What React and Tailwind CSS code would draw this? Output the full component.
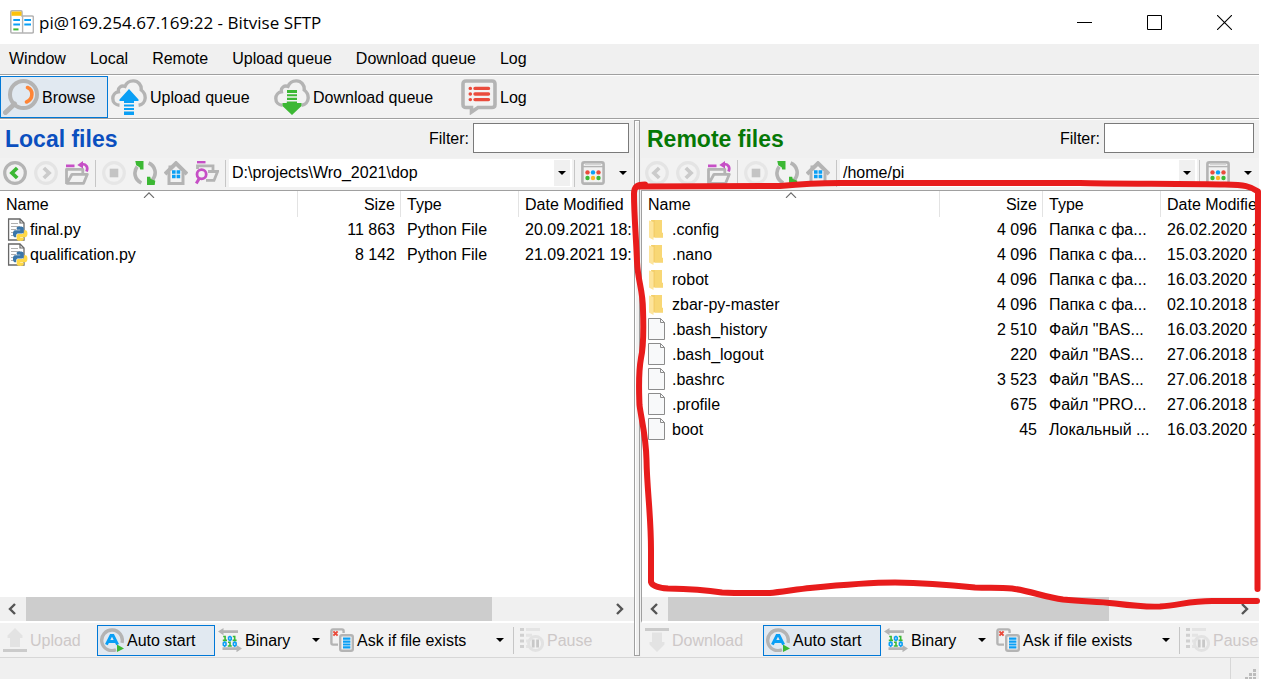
import React from "react";

const GRAY = "#b4b4b4";
const PYTHON_HALF =
  "M14.25.18l.9.2.73.26.59.3.45.32.34.34.25.34.16.33.1.3.04.26.02.2-.01.13V8.5l-.05.63-.13.55-.21.46-.26.38-.3.31-.33.25-.35.19-.35.14-.33.1-.3.07-.26.04-.21.02H8.77l-.69.05-.59.14-.5.22-.41.27-.33.32-.27.35-.2.36-.15.37-.1.35-.07.32-.04.27-.02.21v3.06H3.17l-.21-.03-.28-.07-.32-.12-.35-.18-.36-.26-.36-.36-.35-.46-.32-.59-.28-.73-.21-.88-.14-1.05-.05-1.23.06-1.22.16-1.04.24-.87.32-.71.36-.57.4-.44.42-.33.42-.24.4-.16.36-.1.32-.05.24-.01h.16l.06.01h8.16v-.83H6.18l-.01-2.75-.02-.37.05-.34.11-.31.17-.28.25-.26.31-.23.38-.2.44-.18.51-.15.58-.12.64-.1.71-.06.77-.04.84-.02 1.27.05z";

function Svg({ size = 24, children }) {
  return (
    <svg width={size} height={size} viewBox={`0 0 ${size} ${size}`} fill="none" className="shrink-0" aria-hidden="true">
      {children}
    </svg>
  );
}

/* Large toolbar icons */
const BrowseIcon = () => (
  <Svg size={36}>
    <path d="M11.5 25L2.5 33.5" stroke={GRAY} strokeWidth="5" strokeLinecap="round" />
    <circle cx="20.5" cy="15.5" r="13.5" stroke={GRAY} strokeWidth="4" />
    <path d="M24.5 8.5C30.5 11 30.5 20 23.5 23" stroke="#ff8536" strokeWidth="3.6" strokeLinecap="round" />
  </Svg>
);
const Cloud = () => (
  <path
    d="M8.5 26.3C4.5 26 1.8 23.2 1.8 19.4C1.8 16 4.2 13.3 7.4 12.8C6.6 8.6 10.4 6 14 7.4C15.6 3.6 18.8 1.8 22.4 1.9C27.4 2 30.6 6 30.2 11C32.8 13 34.3 15.8 34.2 19C34 22.8 31.4 25.8 27.6 26.3"
    stroke={GRAY}
    strokeWidth="3.4"
  />
);
const UploadQueueIcon = () => (
  <Svg size={36}>
    <Cloud />
    <path d="M18 10L27.5 20.5V22H23V24H13V22H8.5V20.5Z M13 25.5H23V27.5H13Z M13 29H23V31H13Z M13 32.5H23V36H13Z" fill="#0a9ff5" />
  </Svg>
);
const DownloadQueueIcon = () => (
  <Svg size={36}>
    <Cloud />
    <path d="M18 36L8.5 27V24H12.8V22.5H23V24H27.5V27Z M13 11H23V14H13Z M13 15.2H23V17.3H13Z M13 18.8H23V21H13Z" fill="#3cb834" />
  </Svg>
);
const LogIcon = () => (
  <Svg size={36}>
    <path d="M5 2H31Q34 2 34 5V25.5Q34 28.5 31 28.5H17L10.5 33V28.5H5Q2 28.5 2 25.5V5Q2 2 5 2Z" stroke={GRAY} strokeWidth="3.6" />
    <path d="M14 9.4H27.5M14 15H27.5M14 20.6H27.5M9.2 9.4H9.4M9.2 15H9.4M9.2 20.6H9.4" stroke="#ea4b3c" strokeWidth="3.4" strokeLinecap="round" />
  </Svg>
);

/* Navigation icons */
const BackIcon = ({ disabled }) => (
  <Svg>
    <circle cx="12" cy="12" r="10.3" stroke={disabled ? "#e4e4e4" : GRAY} strokeWidth="3.2" />
    <path d="M14.2 7L9 12L14.2 17" stroke={disabled ? "#cbcbcb" : "#3cb834"} strokeWidth="3.8" />
  </Svg>
);
const ForwardIcon = () => (
  <Svg>
    <circle cx="12" cy="12" r="10.3" stroke="#e4e4e4" strokeWidth="3.2" />
    <path d="M9.8 7L15 12L9.8 17" stroke="#cbcbcb" strokeWidth="3.8" />
  </Svg>
);
const UpFolderIcon = () => (
  <Svg>
    <path d="M1.5 23V8.3H17.8V12.5M2 22.3L7 13.3H22.3L18.6 22.3Z" stroke={GRAY} strokeWidth="2.8" strokeLinejoin="round" />
    <path d="M1 3.6H9.5V6.2H1Z M12.3 4L18 0V7.6Z" fill="#c64fc6" />
    <path d="M17 3.2C21.5 3 23.3 6.2 21.5 10.5" stroke="#c64fc6" strokeWidth="2.8" />
  </Svg>
);
const StopIcon = () => (
  <Svg>
    <circle cx="12" cy="12" r="10.3" stroke="#e6e6e6" strokeWidth="3.2" />
    <path d="M7.7 7.7H16.3V16.3H7.7Z" fill="#c4c4c4" />
  </Svg>
);
const RefreshIcon = () => (
  <Svg>
    <path d="M4.2 5.6C.2 11 1.5 18.5 8.3 22M15.6 2C22.5 5 24.5 13.5 19 19.4" stroke={GRAY} strokeWidth="3.6" />
    <path d="M2.3 0H10.5V8.6H7.2L6.6 6.3L3.2 4.3Z M21.7 24H14V15.8H17.2L17.8 18L22.3 19.8Z" fill="#3cb834" />
  </Svg>
);
const HomeIcon = () => (
  <Svg>
    <path d="M5 11V22.4H19V11" stroke={GRAY} strokeWidth="3" />
    <path d="M1 13L12 2.2L23 13" stroke={GRAY} strokeWidth="4" />
    <path d="M4.5 4.5H7V9H4.5Z" fill={GRAY} />
    <path d="M8 9.3H11.6V12.8H8Z M12.6 9.3H16.2V12.8H12.6Z M8 13.8H11.6V17.3H8Z M12.6 13.8H16.2V17.3H12.6Z" fill="#0a9ff5" />
  </Svg>
);
const FindFolderIcon = () => (
  <Svg>
    <path d="M2.5 8V4.8H18V10M13 10.5H22.6L19 19.4H11" stroke={GRAY} strokeWidth="2.8" />
    <path d="M2 0H10.5V2.4H2Z" fill="#c64fc6" />
    <circle cx="6.6" cy="13.3" r="4.6" stroke="#c64fc6" strokeWidth="2.8" />
    <path d="M4.2 17.6L1.3 22.6" stroke="#c64fc6" strokeWidth="3" />
  </Svg>
);
const ViewIcon = () => (
  <Svg>
    <rect x="1.4" y="1.4" width="21.2" height="21.2" rx="1.8" stroke={GRAY} strokeWidth="2.6" />
    <path d="M2 5.6H22" stroke={GRAY} strokeWidth="1.4" />
    <path d="M4 3.2H20" stroke="#d4d4d4" strokeWidth="1.6" />
    <g>
      <circle cx="6.5" cy="11.4" r="2.2" fill="#ea4b3c" />
      <circle cx="12" cy="11.4" r="2.2" fill="#0a9ff5" />
      <circle cx="17.5" cy="11.4" r="2.2" fill="#ea4b3c" />
      <circle cx="6.5" cy="17" r="2.2" fill="#3cb834" />
      <circle cx="12" cy="17" r="2.2" fill="#fdb528" />
      <circle cx="17.5" cy="17" r="2.2" fill="#3cb834" />
    </g>
  </Svg>
);

/* Transfer bar icons */
const UploadIcon = () => (
  <Svg>
    <path d="M12 0L19.5 7.5V10H17V19H7V10H4.5V7.5Z" fill="#e3e3e3" />
    <path d="M0 21H24V24H0Z" fill="#cbcbcb" />
  </Svg>
);
const DownloadIcon = () => (
  <Svg>
    <path d="M12 24L4.5 16.5V14H7V4.5H17V14H19.5V16.5Z" fill="#e3e3e3" />
    <path d="M0 0H24V3H0Z" fill="#cbcbcb" />
  </Svg>
);
const AutoIcon = () => (
  <Svg>
    <path d="M16 21.8A10.3 10.3 0 1 1 22 14.8" stroke={GRAY} strokeWidth="3.4" />
    <path d="M6.4 16.6L11 7.4H13L17.6 16.6M8.6 13.5H15.4" stroke="#0a9ff5" strokeWidth="3" />
    <path d="M17 16.6L24 20.4L17 24Z" fill="#3cb834" />
  </Svg>
);
const BinaryIcon = () => (
  <Svg>
    <path d="M0 3.6L5.5 0V2.2H20V5H5.5V7.2Z M24 20.6L18.5 17V19.2H4.5V22H18.5V24.2Z" fill={GRAY} />
    <path d="M5.2 8.5H7.1V12.4M4.8 12.4H9M14.8 8.5H16.7V12.4M14.6 12.4H18.6M10 14.2H12V18M9.8 18H13.8" stroke="#3cb834" strokeWidth="1.6" />
    <path d="M10.6 11.6V9.3L12 8.4L13.2 9.3V11.6L12 12.5ZM5.3 17.2V15L6.7 14L8 15V17.2L6.7 18.2ZM15.4 17.2V15L16.8 14L18.1 15V17.2L16.8 18.2Z" stroke="#0a9ff5" strokeWidth="1.6" />
  </Svg>
);
const AskIcon = () => (
  <Svg>
    <path d="M8 16.6H3Q1.4 16.6 1.4 15V3Q1.4 1.4 3 1.4H12Q13.6 1.4 13.6 3V5" stroke={GRAY} strokeWidth="2.4" />
    <path d="M3.4 3.4L7.6 7.6M7.6 3.4L3.4 7.6" stroke="#ea4b3c" strokeWidth="2" />
    <rect x="10.2" y="7.2" width="12.6" height="15.6" rx="1.8" fill="#f2f2f2" stroke={GRAY} strokeWidth="2.4" />
    <path d="M13 10.7H20.4M13 13.6H20.4M13 16.5H20.4M13 19.4H20.4" stroke="#0a9ff5" strokeWidth="2.2" />
  </Svg>
);
const PauseIcon = () => (
  <Svg>
    <path d="M0 1.5H4M0 7.3H4M0 13H4M0 18.6H4" stroke="#d0d0d0" strokeWidth="3" />
    <path d="M6 1.5H20M6 7.3H12M6 13H9M6 18.6H9" stroke="#e4e4e4" strokeWidth="3" />
    <circle cx="15.6" cy="15.5" r="7" stroke="#e2e2e2" strokeWidth="3" />
    <path d="M13.2 11.5V19.5M17.6 11.5V19.5" stroke="#c8c8c8" strokeWidth="2.8" />
  </Svg>
);

/* File list icons */
const PythonFileIcon = () => (
  <Svg>
    <path d="M2.6 1H14L18 5V22H2.6Z" fill="#fff" stroke="#686868" strokeWidth="1.3" />
    <path d="M14 1V5H18" stroke="#686868" strokeWidth="1.2" />
    <path d="M5 5.5H12M5 8.5H14M5 11.5H10M5 14.5H8M5 17.5H8" stroke="#b0b0b0" />
    <g transform="translate(7 8.5) scale(.6)">
      <path d={PYTHON_HALF} fill="#3a76a9" />
      <path d={PYTHON_HALF} fill="#ffd947" transform="rotate(180 12 12)" />
    </g>
  </Svg>
);
const FolderIcon = () => (
  <Svg>
    <path d="M3 2H14V14.5L15 15.5V19.500H5Z" fill="#f4cf6b" />
    <path d="M7 2H14V14.5L15 15.5V19.5H7Z" fill="#f8d775" />
    <path d="M1 2.500L5.500 4V22L1 19.500Z" fill="#fde49b" />
  </Svg>
);
const BlankFileIcon = () => (
  <Svg>
    <path d="M.5 .5H12.5L16.5 4.500V21.500H.5Z" fill="#f8f9fa" stroke="#8c8c8c" />
    <path d="M12.500 .5V4.500H16.500" stroke="#8c8c8c" />
  </Svg>
);
const FILE_ICONS = { python: PythonFileIcon, folder: FolderIcon, blank: BlankFileIcon };

const Caret = () => (
  <svg width="8" height="4" viewBox="0 0 8 4" className="shrink-0" aria-hidden="true">
    <path d="M0 0H8L4 4Z" fill="#000" />
  </svg>
);

function NavButton({ label, disabled, children }) {
  return (
    <button type="button" aria-label={label} disabled={disabled} className="flex w-[31px] shrink-0 items-center pl-[3px]">
      {children}
    </button>
  );
}

const Separator = () => <span className="mr-[3px] ml-[2px] h-[27px] w-px shrink-0 bg-[#c6c6c6]" />;

function FileList({ rows }) {
  const head = "h-[26px] p-0 pt-[2px] font-normal";
  return (
    <div className="min-h-0 flex-1 overflow-hidden bg-white">
      <table className="w-[736px] table-fixed border-separate border-spacing-0">
        <colgroup>
          <col className="w-[298px]" />
          <col className="w-[103px]" />
          <col className="w-[118px]" />
          <col />
        </colgroup>
        <thead>
          <tr>
            <th scope="col" aria-sort="ascending" className={`${head} relative border-r border-[#e3e3e3] pl-[6px] text-left`}>
              Name
              <svg width="12" height="7" viewBox="0 0 12 7" fill="none" className="absolute top-0 left-1/2 -translate-x-1/2" aria-hidden="true">
                <path d="M1 6.8L6 1.800L11 6.800" stroke="#6a6a6a" strokeWidth="1.2" />
              </svg>
            </th>
            <th scope="col" className={`${head} border-r border-[#e3e3e3] pr-[5px] text-right`}>Size</th>
            <th scope="col" className={`${head} border-r border-[#e3e3e3] pl-[6px] text-left`}>Type</th>
            <th scope="col" className={`${head} pl-[6px] text-left`}>Date Modified</th>
          </tr>
        </thead>
        <tbody>
          {rows.map(([icon, name, size, type, date]) => {
            const Icon = FILE_ICONS[icon];
            return (
              <tr key={name} className="h-[25px]">
                <td className="p-0 pl-[6px]">
                  <span className="flex items-center">
                    <Icon />
                    {name}
                  </span>
                </td>
                <td className="p-0 pr-[6px] text-right">{size}</td>
                <td className="p-0 pl-[6px] whitespace-nowrap">{type}</td>
                <td className="p-0 pl-[6px] whitespace-nowrap">{date}</td>
              </tr>
            );
          })}
        </tbody>
      </table>
    </div>
  );
}

function ScrollArrow({ label, d }) {
  return (
    <button type="button" aria-label={label} className="flex w-[26px] shrink-0 items-center justify-center">
      <svg width="12" height="12" viewBox="0 0 12 12" fill="none" aria-hidden="true">
        <path d={d} stroke="#555" strokeWidth="2.4" />
      </svg>
    </button>
  );
}

function Scrollbar({ thumb }) {
  return (
    <div className="flex h-[24px] shrink-0 bg-[#f0f0f0]">
      <ScrollArrow label="Scroll left" d="M8 1L3 6L8 11" />
      <div className="flex-1">
        <div className={`h-full bg-[#cdcdcd] ${thumb}`} />
      </div>
      <ScrollArrow label="Scroll right" d="M2 1L7 6L2 11" />
    </div>
  );
}

function TransferButton({ width, active, disabled, caret, icon, children }) {
  const look = active ? "border-[#0078d7] bg-[#e1e9f1]" : "border-transparent";
  return (
    <button
      type="button"
      disabled={disabled}
      className={`flex h-[31px] shrink-0 items-center gap-[3px] border pl-[2px] whitespace-nowrap disabled:text-[#cdc8c8] ${look} ${width}`}
    >
      {icon}
      <span className="pt-[2px]">{children}</span>
      {caret && (
        <span className="ml-auto pr-[6px]">
          <Caret />
        </span>
      )}
    </button>
  );
}

function Panel({ id, title, titleColor, filterWidth, path, localSide, rows, thumb }) {
  const inset = localSide ? "" : "pl-px";
  return (
    <section className="flex min-h-0 min-w-0 flex-col overflow-hidden">
      <div className={`flex h-[38px] shrink-0 items-center pr-[5px] pb-[2px] ${inset}`}>
        <h2 className={`pt-[2px] pl-[5px] text-[23px] font-bold ${titleColor}`}>{title}</h2>
        <label htmlFor={`${id}-filter`} className="ml-auto pt-[2px] pr-[4px]">Filter:</label>
        <input id={`${id}-filter`} type="text" className={`h-[30px] border border-[#7a7a7a] bg-white px-1 outline-none ${filterWidth}`} />
      </div>
      <div className={`flex h-[32px] shrink-0 items-center bg-[#f2f2f2] pb-[2px] ${inset}`}>
        <NavButton label="Back" disabled={!localSide}><BackIcon disabled={!localSide} /></NavButton>
        <NavButton label="Forward" disabled><ForwardIcon /></NavButton>
        <NavButton label="Up one folder"><UpFolderIcon /></NavButton>
        <Separator />
        <NavButton label="Stop" disabled><StopIcon /></NavButton>
        <NavButton label="Refresh"><RefreshIcon /></NavButton>
        <NavButton label="Home"><HomeIcon /></NavButton>
        {localSide && <NavButton label="Find folder"><FindFolderIcon /></NavButton>}
        <Separator />
        <div className="relative h-[28px] min-w-0 flex-1">
          <select aria-label={`${title} path`} className="h-full w-full appearance-none rounded-none bg-white pl-[3px] outline-none">
            <option>{path}</option>
          </select>
          <span className="pointer-events-none absolute top-px right-[2px] bottom-px flex w-[16px] items-center justify-center bg-[#f0f0f0]">
            <Caret />
          </span>
        </div>
        <Separator />
        <NavButton label="View"><ViewIcon /></NavButton>
        <button type="button" aria-label="View options" className="flex h-full w-[25px] shrink-0 items-center justify-center pl-[3px]">
          <Caret />
        </button>
      </div>
      <div className={`flex min-h-0 flex-1 flex-col border-t border-b-2 border-t-[#a0a0a0] border-b-white ${localSide ? "" : "border-l border-l-[#a0a0a0]"}`}>
        <FileList rows={rows} />
        <Scrollbar thumb={thumb} />
      </div>
      <div className={`flex h-[34px] shrink-0 items-center overflow-hidden bg-[#f2f2f2] ${inset}`}>
        {localSide ? (
          <TransferButton width="w-[97px]" disabled icon={<UploadIcon />}>Upload</TransferButton>
        ) : (
          <TransferButton width="w-[121px]" disabled icon={<DownloadIcon />}>Download</TransferButton>
        )}
        <TransferButton width="w-[118px]" active icon={<AutoIcon />}>Auto start</TransferButton>
        <TransferButton width="w-[112px]" caret icon={<BinaryIcon />}>Binary</TransferButton>
        <TransferButton width="w-[184px]" caret icon={<AskIcon />}>Ask if file exists</TransferButton>
        <Separator />
        <TransferButton width="w-[90px]" disabled icon={<PauseIcon />}>Pause</TransferButton>
      </div>
    </section>
  );
}

function ToolButton({ width, active, icon, children }) {
  const look = active ? "border-[#0078d7] bg-[#e1e9f1]" : "border-transparent";
  return (
    <button type="button" className={`flex h-[42px] shrink-0 items-center gap-[3px] border pl-[2px] whitespace-nowrap ${look} ${width}`}>
      {icon}
      <span className="pt-[2px]">{children}</span>
    </button>
  );
}

const LOCAL_ROWS = [
  ["python", "final.py", "11 863", "Python File", "20.09.2021 18:"],
  ["python", "qualification.py", "8 142", "Python File", "21.09.2021 19:"],
];
const REMOTE_ROWS = [
  ["folder", ".config", "4 096", "Папка с фа...", "26.02.2020 1"],
  ["folder", ".nano", "4 096", "Папка с фа...", "15.03.2020 1"],
  ["folder", "robot", "4 096", "Папка с фа...", "16.03.2020 1"],
  ["folder", "zbar-py-master", "4 096", "Папка с фа...", "02.10.2018 1"],
  ["blank", ".bash_history", "2 510", 'Файл "BAS...', "16.03.2020 1"],
  ["blank", ".bash_logout", "220", 'Файл "BAS...', "27.06.2018 1"],
  ["blank", ".bashrc", "3 523", 'Файл "BAS...', "27.06.2018 1"],
  ["blank", ".profile", "675", 'Файл "PRO...', "27.06.2018 1"],
  ["blank", "boot", "45", "Локальный ...", "16.03.2020 1"],
];
const MENU = ["Window", "Local", "Remote", "Upload queue", "Download queue", "Log"];

export default function App() {
  return (
    <div className="relative flex h-screen flex-col overflow-hidden bg-white pr-[4px] font-['Liberation_Sans',Arial,sans-serif] text-[16px] leading-[20px] text-black">
      <header className="flex h-[44px] shrink-0 items-center bg-white pl-[10px]">
        <Svg>
          <path d="M12 6H22Q23.4 6 23.4 7.4V21.6Q23.4 23 22 23H1.9Q.8 23 .8 21.6V2Q.8 .8 2 .8H11Q12 .8 12 2Z" fill="#fff" stroke={GRAY} strokeWidth="1.6" />
          <path d="M12.6 6V23" stroke={GRAY} strokeWidth="1.4" />
          <path d="M1.5 1.5H11.500V5.8H1.5Z" fill="#fcc20d" />
          <path d="M3.3 10H10M3.3 14.6H10M14.3 10H21M14.3 14.6H21" stroke="#0a9ff5" strokeWidth="2" />
          <path d="M3.3 19.4H8.5" stroke="#3cb834" strokeWidth="2" />
        </Svg>
        <h1 className="pt-px pl-[5px] font-['Open_Sans',sans-serif] text-[17px] font-normal">pi@169.254.67.169:22 - Bitvise SFTP</h1>
        <div className="ml-auto flex h-full">
          <button type="button" aria-label="Minimize" className="flex w-[70px] items-center justify-center">
            <svg width="15" height="15" viewBox="0 0 15 15" fill="none"><path d="M0 7.5H15" stroke="#000" /></svg>
          </button>
          <button type="button" aria-label="Maximize" className="flex w-[70px] items-center justify-center">
            <svg width="15" height="15" viewBox="0 0 15 15" fill="none"><path d="M.5 .5H14.5V14.5H.5Z" stroke="#000" /></svg>
          </button>
          <button type="button" aria-label="Close" className="flex w-[70px] items-center justify-center">
            <svg width="15" height="15" viewBox="0 0 15 15" fill="none"><path d="M0 0L15 15M15 0L0 15" stroke="#000" strokeWidth="1.1" /></svg>
          </button>
        </div>
      </header>

      <nav className="flex h-[31px] shrink-0 items-center gap-[24px] border-b border-[#a0a0a0] bg-[#f0f0f0] pl-[9px]">
        {MENU.map((item) => (
          <button key={item} type="button">{item}</button>
        ))}
      </nav>

      <div className="flex h-[44px] shrink-0 items-start border-t border-b border-t-white border-b-[#a0a0a0] bg-[#f2f2f2]">
        <ToolButton width="w-[108px]" active icon={<BrowseIcon />}>Browse</ToolButton>
        <ToolButton width="w-[163px]" icon={<UploadQueueIcon />}>Upload queue</ToolButton>
        <ToolButton width="w-[187px]" icon={<DownloadQueueIcon />}>Download queue</ToolButton>
        <ToolButton width="w-[90px]" icon={<LogIcon />}>Log</ToolButton>
      </div>

      <main className="grid min-h-0 flex-1 grid-cols-[minmax(0,634fr)_7px_minmax(0,618fr)] grid-rows-[minmax(0,1fr)] border-t border-t-white bg-[#f0f0f0]">
        <Panel
          id="local"
          title="Local files"
          titleColor="text-[#0b4fbf]"
          filterWidth="w-[156px]"
          path="D:\projects\Wro_2021\dop"
          localSide
          rows={LOCAL_ROWS}
          thumb="w-4/5"
        />
        <div className="mr-px mb-px border border-[#a0a0a0] bg-[#f0f0f0] shadow-[inset_1px_1px_0_#fff]" />
        <Panel
          id="remote"
          title="Remote files"
          titleColor="text-[#067806]"
          filterWidth="w-[150px]"
          path="/home/pi"
          rows={REMOTE_ROWS}
          thumb="w-[78%]"
        />
      </main>

      <footer className="flex h-[22px] shrink-0 border-t border-[#d7d7d7] bg-[#f0f0f0]">
        <div className="ml-auto flex w-[29px] items-end justify-end border-l border-[#d7d7d7] pr-[2px]">
          <svg width="12" height="10" viewBox="0 0 12 10" aria-hidden="true">
            <path d="M8 0H11V3H8Z M8 4H11V7H8Z M4 4H7V7H4Z M8 8H11V10H8Z M4 8H7V10H4Z M0 8H3V10H0Z" fill="#bcbcbc" />
          </svg>
        </div>
      </footer>

      <svg className="pointer-events-none absolute inset-0 h-full w-full" viewBox="0 0 1263 679" preserveAspectRatio="none" fill="none" aria-hidden="true">
        <path
          d="M645 184.5C638 184.5 634 186 634 194C634 215 636 235 637 262C638 282 643 290 643 310C643.5 325 644 345 641 358C638 375 639 390 639.5 405C641 418 646 435 646.5 460C647 490 651 515 651 550V582C652 586 660 588 668 588.5C690 589 705 590 722 592.5C740 593.5 757 593 770 593C780 592 800 589 810 588C840 585 870 582.5 895 582.5C930 583 950 585 975 587.5C990 588 1000 587.5 1012 588.5C1030 591 1045 597 1063 599.5C1085 602 1095 601 1115 603.5C1135 606 1150 607 1160 606.5C1180 605 1190 601 1212 601H1257"
          stroke="#e81c1c"
          strokeWidth="6"
          strokeLinecap="round"
          strokeLinejoin="round"
        />
        <path
          d="M638 186.5C690 186.5 740 186.5 780 186C800 184 825 182.5 850 183H1080C1110 184 1190 183.5 1225 184.5C1245 185 1250 186 1258 191.5C1258.5 240 1258 320 1257.5 400V589"
          stroke="#e81c1c"
          strokeWidth="6"
          strokeLinecap="round"
          strokeLinejoin="round"
        />
      </svg>
    </div>
  );
}
